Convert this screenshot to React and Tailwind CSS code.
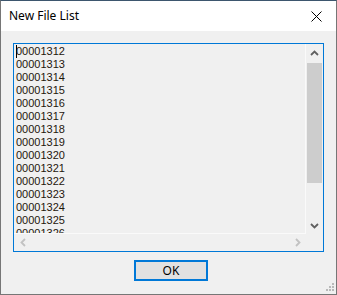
import React from 'react';

const lines = [];
for (let n = 1312; n <= 1326; n++) lines.push(String(n).padStart(8, '0'));

const Chevron = ({ dir = 'up', color = '#606060' }) => {
    const paths = {
        up: 'M1 5 L4.5 1.5 L8 5',
        down: 'M1 1 L4.5 4.5 L8 1',
        left: 'M5 1 L1.5 4.5 L5 8',
        right: 'M1 1 L4.5 4.5 L1 8',
    };
    const vertical = dir === 'up' || dir === 'down';
    return (
        <svg width={vertical ? 9 : 6} height={vertical ? 6 : 9} viewBox={vertical ? '0 0 9 6' : '0 0 6 9'}>
            <path d={paths[dir]} fill="none" stroke={color} strokeWidth="1.8" />
        </svg>
    );
};

const App = () => {
    return (
        <div className="relative w-[337px] h-[295px] flex flex-col border border-[#767676] border-t-[#3d566e] bg-[#f0f0f0] overflow-hidden">
            {/* Title bar */}
            <div className="h-[30px] bg-white flex items-center justify-between pl-[8px] pr-[14px]">
                <span className="text-[12px] text-black font-['Noto_Sans',sans-serif] leading-none pb-[1px]">New File List</span>
                <svg width="11" height="11" viewBox="0 0 11 11">
                    <path d="M0.5 0.5 L10.5 10.5 M10.5 0.5 L0.5 10.5" stroke="#000" strokeWidth="1" />
                </svg>
            </div>

            {/* Body */}
            <div className="flex-1 flex flex-col px-[12px] pt-[12px]">
                <div className="h-[209px] border border-[#0078d7] grid grid-cols-[1fr_17px] grid-rows-[1fr_17px]">
                    <div className="overflow-hidden pl-[2px] pt-[1px] border-r border-b border-[#fafafa] font-['Liberation_Sans',Arial,sans-serif] text-[11px] leading-[13px] text-[#1f160c]">
                        {lines.map((l, i) => (
                            <div key={l} className="flex items-center h-[13px]">
                                {i === 0 && <span className="inline-block w-[1px] h-[13px] bg-black -mr-[1px]"></span>}
                                <span className={i === 0 ? 'ml-0' : ''}>{l}</span>
                            </div>
                        ))}
                    </div>

                    {/* Vertical scrollbar */}
                    <div className="flex flex-col bg-[#f0f0f0]">
                        <div className="h-[17px] flex items-center justify-center pt-[1px]">
                            <Chevron dir="up" />
                        </div>
                        <div className="mx-[1px] mt-[2px] h-[120px] bg-[#cdcdcd]"></div>
                        <div className="flex-1"></div>
                        <div className="h-[17px] flex items-center justify-center">
                            <Chevron dir="down" />
                        </div>
                    </div>

                    {/* Horizontal scrollbar */}
                    <div className="flex items-center justify-between bg-[#f0f0f0]">
                        <div className="w-[17px] h-[17px] flex items-center justify-center">
                            <Chevron dir="left" color="#c2c2c2" />
                        </div>
                        <div className="w-[17px] h-[17px] flex items-center justify-center">
                            <Chevron dir="right" color="#c2c2c2" />
                        </div>
                    </div>
                    <div className="bg-[#f0f0f0]"></div>
                </div>

                <button className="mt-[8px] ml-[121px] w-[74px] h-[21px] border-2 border-[#0078d7] bg-[#e1e1e1] flex items-center justify-center text-[12px] text-black font-['Noto_Sans',sans-serif] leading-none">
                    OK
                </button>
            </div>

            {/* Resize grip */}
            <div className="absolute right-[2px] bottom-[2px] w-[9px] h-[9px]">
                <span className="absolute right-0 top-0 w-[2px] h-[2px] bg-[#b9b9b9]"></span>
                <span className="absolute right-0 top-[3px] w-[2px] h-[2px] bg-[#b9b9b9]"></span>
                <span className="absolute right-[3px] top-[3px] w-[2px] h-[2px] bg-[#b9b9b9]"></span>
                <span className="absolute right-0 top-[6px] w-[2px] h-[2px] bg-[#b9b9b9]"></span>
                <span className="absolute right-[3px] top-[6px] w-[2px] h-[2px] bg-[#b9b9b9]"></span>
                <span className="absolute right-[6px] top-[6px] w-[2px] h-[2px] bg-[#b9b9b9]"></span>
            </div>
        </div>
    );
};

export default App;
